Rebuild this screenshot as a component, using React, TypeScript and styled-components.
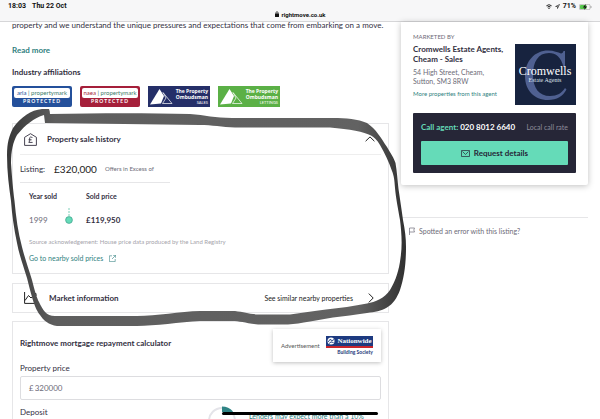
import React from "react";
import styled, { createGlobalStyle } from "styled-components";

const GlobalStyle = createGlobalStyle`
  * { box-sizing: border-box; }
  body {
    margin: 0;
    background: #fff;
    color: #33303f;
    font-family: Lato, "Liberation Sans", sans-serif;
    font-size: 8px;
    line-height: 12px;
  }
  h2, h3, p { margin: 0; font-size: 8px; }
  a { color: #2f7f80; text-decoration: none; }
  svg { display: block; flex: none; }
`

const Page = styled.div`
  position: relative;
  height: 100vh;
  overflow: hidden;
  display: flex;
  flex-direction: column;
`

const StatusBar = styled.header`
  display: grid;
  grid-template-columns: 1fr auto 1fr;
  flex: none;
  height: 22px;
  padding: 0 8px;
  background: #f7f7f8;
  border-bottom: 1px solid #d6d6d8;
  color: #111;
  font: 700 7px/13px Roboto, "Liberation Sans", sans-serif;
`

const Clock = styled.div`
  display: flex;
  gap: 6px;
`

const Address = styled.div`
  display: flex;
  align-items: center;
  align-self: end;
  gap: 3px;
  height: 14px;
  font-size: 6px;
`

const Indicators = styled.div`
  display: flex;
  justify-content: flex-end;
  align-items: center;
  gap: 3px;
  height: 13px;
`

const Columns = styled.main`
  display: grid;
  grid-template-columns: minmax(0, 1fr) 187px;
  column-gap: 12px;
  padding: 0 12px;
`

const Details = styled.div`
  display: flex;
  flex-direction: column;
`

const Description = styled.p`
  height: 12px;
  margin-top: -3px;
  white-space: nowrap;
`

const ReadMore = styled.a`
  align-self: flex-start;
  margin-top: 13px;
  font-weight: 700;
`

const SectionTitle = styled.h2`
  margin-top: 10px;
`

const Badges = styled.div`
  display: flex;
  gap: 8px;
  margin-top: 8px;
`

const MarkBadge = styled.div<{ $color: string }>`
  display: flex;
  flex-direction: column;
  align-items: center;
  width: 60px;
  height: 21px;
  padding: 2px;
  border-radius: 2px;
  background: ${p => p.$color};
  color: #fff;
  font: 700 5px/7px Lato, sans-serif;
  letter-spacing: 1px;
`

const MarkName = styled.div`
  width: 100%;
  height: 11px;
  border-radius: 2px;
  background: #fff;
  color: #3d7b6b;
  font: 400 6px/10px Lato, sans-serif;
  letter-spacing: 0;
  text-align: center;
  white-space: nowrap;
`

const MarkPrefix = styled.span<{ $color: string }>`
  color: ${p => p.$color};
`

const OmbudsmanBadge = styled.div<{ $color: string }>`
  display: flex;
  align-items: center;
  justify-content: space-between;
  width: 62px;
  height: 21px;
  padding: 0 2px;
  background: ${p => p.$color};
  color: #fff;
`

const OmbudsmanText = styled.div`
  text-align: right;
  white-space: nowrap;
  font: 700 5px/6px "Open Sans", sans-serif;
`

const OmbudsmanKind = styled.div`
  font: 400 4px/5px Lato, sans-serif;
`

const Card = styled.section`
  border: 1px solid #e6e6e8;
  padding: 0 7px;
`

const HistoryCard = styled(Card)`
  margin-top: 16px;
  padding-bottom: 9px;
`

const HistoryToggle = styled.button`
  display: flex;
  align-items: center;
  width: 100%;
  height: 31px;
  padding: 0 6px 0 4px;
  border: 0;
  border-bottom: 1px solid #eee;
  background: none;
  color: inherit;
  font: inherit;
  font-weight: 700;
  text-align: left;
`

const ToggleLabel = styled.span`
  flex: 1;
  margin-left: 10px;
`

const ListingRow = styled.div`
  display: flex;
  align-items: center;
  width: 150px;
  height: 28px;
  border-bottom: 1px solid #e6e6e8;
`

const ListingPrice = styled.span`
  margin: 0 8px 0 9px;
  font-size: 10px;
  color: #222;
`

const Small = styled.span`
  font-size: 6px;
  color: #6d6b78;
`

const SoldTable = styled.table`
  margin: 5px 0 0 9px;
  border-collapse: collapse;
  font-size: 7px;
  text-align: left;
  th, td { padding: 0; }
  th { height: 16px; }
  td { height: 32px; }
`

const YearCell = styled.td`
  width: 36px;
  color: #6d6b78;
  font-size: 8px;
`

const MarkerCell = styled.td`
  width: 21px;
`

const PriceCell = styled.td`
  font-weight: 700;
  font-size: 8px;
`

const Source = styled.p`
  margin: 0 0 4px 9px;
  color: #a5a4ab;
  font-size: 6px;
`

const NearbyLink = styled.a`
  display: inline-flex;
  align-items: center;
  gap: 6px;
  margin-left: 9px;
  font-size: 7px;
`

const MarketCard = styled(Card)`
  display: flex;
  align-items: center;
  height: 30px;
  margin-top: 9px;
  padding: 0 14px 0 11px;
`

const MarketTitle = styled.h3`
  flex: 1;
  margin-left: 12px;
`

const SimilarButton = styled.button`
  display: flex;
  align-items: center;
  gap: 15px;
  padding: 0;
  border: 0;
  background: none;
  color: #222;
  font: inherit;
  font-size: 7px;
`

const Calculator = styled(Card)`
  margin-top: 8px;
`

const CalculatorHead = styled.div`
  display: flex;
  justify-content: space-between;
  padding-top: 7px;
`

const CalculatorTitle = styled.h3`
  margin-top: 8px;
`

const Advert = styled.div`
  display: flex;
  align-items: center;
  justify-content: space-between;
  width: 108px;
  height: 33px;
  padding: 0 8px;
  box-shadow: 0 1px 4px rgba(0, 0, 0, 0.25);
  color: #555;
  font-size: 6px;
`

const Nationwide = styled.div`
  display: flex;
  flex-direction: column;
  align-items: flex-end;
  width: 47px;
  color: #26397a;
  font: 700 5px/8px Lato, sans-serif;
`

const NationwideName = styled.div`
  display: flex;
  align-items: center;
  justify-content: center;
  gap: 2px;
  width: 100%;
  height: 12px;
  border-bottom: 2px solid #c9252c;
  background: #1d3a80;
  color: #fff;
  font: 700 7px/10px "Liberation Serif", serif;
`

const FieldLabel = styled.label`
  display: block;
`

const PriceField = styled.div`
  display: flex;
  align-items: center;
  gap: 1px;
  height: 24px;
  margin: 2px 0 6px;
  padding: 0 8px;
  border: 1px solid #dddde0;
  border-radius: 2px;
  color: #6d6b78;
`

const PriceInput = styled.input`
  flex: 1;
  min-width: 0;
  padding: 0;
  border: 0;
  outline: 0;
  background: none;
  color: inherit;
  font: inherit;
`

const DepositRow = styled.div`
  display: flex;
  align-items: flex-start;
  height: 40px;
`

const DepositLabel = styled(FieldLabel)`
  width: 187px;
`

const LenderNote = styled.p`
  margin: 4px 0 0 12px;
  color: #2f7f80;
  font-size: 7px;
`

const Sidebar = styled.aside`
  display: flex;
  flex-direction: column;
`

const AgentCard = styled.section`
  padding: 9px 12px 12px;
  border-radius: 0 0 2px 2px;
  box-shadow: 0 1px 6px rgba(0, 0, 0, 0.25);
`

const AgentInfo = styled.div`
  display: flex;
  justify-content: space-between;
  white-space: nowrap;
`

const MarketedBy = styled.p`
  color: #6d6b78;
  font-size: 6px;
`

const AgentName = styled.h2`
  margin-top: 1px;
  line-height: 10px;
`

const AgentAddress = styled.p`
  margin: 4px 0 2px;
  color: #6d6b78;
  font-size: 7px;
  line-height: 9px;
`

const AgentLink = styled.a`
  display: block;
  font-size: 6px;
`

const AgentLogo = styled.svg`
  width: 61px;
  height: 61px;
  margin-top: 13px;
`

const ContactBox = styled.div`
  margin-top: 8px;
  padding: 8px;
  border-radius: 1px;
  background: #262637;
`

const ContactRow = styled.div`
  display: flex;
  justify-content: space-between;
  color: #8d8c99;
  font-size: 7px;
`

const Phone = styled.strong`
  color: #fff;
  font-size: 8px;
`

const PhoneLabel = styled.span`
  color: #65dbb8;
`

const RequestButton = styled.button`
  display: flex;
  align-items: center;
  justify-content: center;
  gap: 4px;
  width: 100%;
  height: 24px;
  margin-top: 8px;
  border: 0;
  border-radius: 1px;
  background: #65dbb8;
  color: #262637;
  font: inherit;
  font-weight: 700;
`

const ReportLink = styled.a`
  display: flex;
  align-items: center;
  gap: 4px;
  margin-top: 32px;
  padding: 7px 0 0 8px;
  border-top: 1px solid #e6e6e8;
  color: #6d6b78;
  font-size: 7px;
`

const HomeIndicator = styled.div`
  position: absolute;
  bottom: 4px;
  left: 37%;
  right: 37%;
  height: 3px;
  border-radius: 2px;
  background: #000;
`

const Scribble = styled.svg`
  position: absolute;
  top: 0;
  left: 0;
  pointer-events: none;
`

function Triangles() {
  return (
    <svg width="23" height="17" viewBox="0 0 23 17">
      <path d="M9.500 1 L14 8 L11 15.500 L0 16.500 Z" fill="#fff" />
      <path d="M13 4.500 L22 15.500 L12.500 15.500 L16 10 Z" fill="none" stroke="#fff" strokeWidth=".7" />
    </svg>
  )
}

function Ombudsman({ color, kind }: { color: string; kind: string }) {
  return (
    <OmbudsmanBadge $color={color}>
      <Triangles />
      <OmbudsmanText>
        The Property<br />Ombudsman
        <OmbudsmanKind>{kind}</OmbudsmanKind>
      </OmbudsmanText>
    </OmbudsmanBadge>
  )
}

function Propertymark({ color, prefix }: { color: string; prefix: string }) {
  return (
    <MarkBadge $color={color}>
      <MarkName><MarkPrefix $color={color}>{prefix}</MarkPrefix> | propertymark</MarkName>
      PROTECTED
    </MarkBadge>
  )
}

export default function App() {
  return (
    <Page>
      <GlobalStyle />
      <StatusBar>
        <Clock><span>18:03</span><span>Thu 22 Oct</span></Clock>
        <Address>
          <svg width="4" height="6" viewBox="0 0 4 6">
            <rect y="2.500" width="4" height="3.500" rx=".5" fill="#111" />
            <path d="M1 3V1.700a1 1 0 0 1 2 0V3" fill="none" stroke="#111" strokeWidth=".7" />
          </svg>
          rightmove.co.uk
        </Address>
        <Indicators>
          <svg width="6" height="5" viewBox="0 0 6 5">
            <path d="M.4 1.800Q3 -.4 5.600 1.800M1.500 3Q3 1.800 4.500 3" fill="none" stroke="#111" strokeWidth=".9" />
            <circle cx="3" cy="4.200" r=".7" fill="#111" />
          </svg>
          <svg width="5" height="5" viewBox="0 0 5 5">
            <path d="M4.500 .5L.6 2.500H2.500V4.500Z" fill="none" stroke="#111" strokeWidth=".6" />
          </svg>
          <span>71%</span>
          <svg width="13" height="6" viewBox="0 0 13 6">
            <rect x=".3" y=".3" width="10.800" height="5.400" rx="1.500" fill="none" stroke="#999" strokeWidth=".6" />
            <rect x="1" y="1" width="6.500" height="4" rx=".8" fill="#57c84d" />
            <path d="M6.800 0L3.800 3.400H5.800L5 6L8.200 2.600H6.200Z" fill="#111" />
            <path d="M12 2v2" stroke="#999" strokeWidth=".8" />
          </svg>
        </Indicators>
      </StatusBar>

      <Columns>
        <Details>
          <Description>
            property and we understand the unique pressures and expectations that come from embarking on a move.
          </Description>
          <ReadMore href="#more">Read more</ReadMore>
          <SectionTitle>Industry affiliations</SectionTitle>
          <Badges>
            <Propertymark color="#24509b" prefix="arla" />
            <Propertymark color="#a51f3a" prefix="naea" />
            <Ombudsman color="#252f68" kind="SALES" />
            <Ombudsman color="#5bb046" kind="LETTINGS" />
          </Badges>

          <HistoryCard>
            <HistoryToggle aria-expanded="true">
              <svg width="13" height="13" viewBox="0 0 13 13" fill="none" stroke="#33303f" strokeWidth=".9">
                <path d="M.6 12.400V4.300L6.500 .7L12.400 4.300V12.400Z" />
                <path d="M8.400 5Q7.800 3.700 6.500 4Q5.300 4.400 5.700 6Q6.100 8 4.800 9.400H8.600M4.500 6.800H7.600" />
              </svg>
              <ToggleLabel>Property sale history</ToggleLabel>
              <svg width="10" height="6" viewBox="0 0 10 6">
                <path d="M.6 5.200L5 .9L9.400 5.200" fill="none" stroke="#222" strokeWidth="1" />
              </svg>
            </HistoryToggle>
            <ListingRow>
              Listing:
              <ListingPrice>£320,000</ListingPrice>
              <Small>Offers in Excess of</Small>
            </ListingRow>
            <SoldTable>
              <thead>
                <tr><th colSpan={2}>Year sold</th><th>Sold price</th></tr>
              </thead>
              <tbody>
                <tr>
                  <YearCell>1999</YearCell>
                  <MarkerCell>
                    <svg width="8" height="30" viewBox="0 0 8 30">
                      <path d="M4 3V11" stroke="#7ccfb8" strokeDasharray="2 1" />
                      <circle cx="4" cy="15" r="3.400" fill="#65dbb8" stroke="#3f9f8b" strokeWidth=".7" />
                    </svg>
                  </MarkerCell>
                  <PriceCell>£119,950</PriceCell>
                </tr>
              </tbody>
            </SoldTable>
            <Source>Source acknowledgement: House price data produced by the Land Registry</Source>
            <NearbyLink href="#sold">
              Go to nearby sold prices
              <svg width="7" height="7" viewBox="0 0 7 7" fill="none" stroke="#2f7f80" strokeWidth=".6">
                <path d="M3 .8H.4V6.600H6.200V4M4.200 .4H6.600V2.800M6.600 .4L3 4" />
              </svg>
            </NearbyLink>
          </HistoryCard>

          <MarketCard>
            <svg width="13" height="12" viewBox="0 0 13 12" fill="none" stroke="#222" strokeWidth="1">
              <path d="M.6 0V11.400H12.500M1 8.500L4.500 3.500L7 6L12 1.500M9.500 1.500H12V4" />
            </svg>
            <MarketTitle>Market information</MarketTitle>
            <SimilarButton>
              See similar nearby properties
              <svg width="6" height="10" viewBox="0 0 6 10">
                <path d="M.8 .6L5.200 5L.8 9.400" fill="none" stroke="#222" strokeWidth="1" />
              </svg>
            </SimilarButton>
          </MarketCard>

          <Calculator>
            <CalculatorHead>
              <CalculatorTitle>Rightmove mortgage repayment calculator</CalculatorTitle>
              <Advert>
                Advertisement
                <Nationwide>
                  <NationwideName>
                    <svg width="8" height="8" viewBox="0 0 8 8">
                      <circle cx="4" cy="4" r="3.500" fill="#fff" />
                      <path d="M1 5L3.500 2L4.500 4L7 2.500M2 6.500L4 5L6.500 5.500" fill="none" stroke="#1d3a80" strokeWidth=".9" />
                    </svg>
                    Nationwide
                  </NationwideName>
                  Building Society
                </Nationwide>
              </Advert>
            </CalculatorHead>
            <FieldLabel htmlFor="price">Property price</FieldLabel>
            <PriceField>
              £
              <PriceInput id="price" defaultValue="320000" />
            </PriceField>
            <DepositRow>
              <DepositLabel as="span">Deposit</DepositLabel>
              <svg width="30" height="32" viewBox="0 0 30 32" fill="none">
                <circle cx="15" cy="15" r="13" stroke="#e4e4e9" strokeWidth="2" />
                <path d="M15 .5A14.500 14.500 0 0 1 26 5.500L22 9A9 9 0 0 0 15 6Z" fill="#2f8485" />
              </svg>
              <LenderNote>Lenders may expect more than a 10%</LenderNote>
            </DepositRow>
          </Calculator>
        </Details>

        <Sidebar>
          <AgentCard>
            <AgentInfo>
              <div>
                <MarketedBy>MARKETED BY</MarketedBy>
                <AgentName>Cromwells Estate Agents,<br />Cheam - Sales</AgentName>
                <AgentAddress>54 High Street, Cheam,<br />Sutton, SM3 8RW</AgentAddress>
                <AgentLink href="#agent">More properties from this agent</AgentLink>
              </div>
              <AgentLogo viewBox="0 0 61 61" role="img" aria-label="Cromwells Estate Agents">
                <rect width="61" height="61" fill="#17233f" />
                <path
                  d="M50 7V23H48.500C46 13 41 9 34 9C23 9 18 18 18 31C18 44 24 52 35 52C42 52 47 49 50 44L51.500 45.500C48 52 42 56 33 56C19 56 10 46 10 32C10 17 20 6.500 33 6.500C39 6.500 43 8.500 46 9.500C47.500 9.500 48 8.500 48.500 7Z"
                  fill="#4f6091"
                />
                <text x="30" y="31" textAnchor="middle" fill="#fff" fontFamily="Liberation Serif" fontSize="12">Cromwells</text>
                <text x="30" y="38" textAnchor="middle" fill="#dfe3ee" fontFamily="Liberation Serif" fontSize="6">Estate Agents</text>
              </AgentLogo>
            </AgentInfo>
            <ContactBox>
              <ContactRow>
                <Phone><PhoneLabel>Call agent:</PhoneLabel> 020 8012 6640</Phone>
                <span>Local call rate</span>
              </ContactRow>
              <RequestButton>
                <svg width="9" height="7" viewBox="0 0 9 7" fill="none" stroke="#262637" strokeWidth=".7">
                  <path d="M.5 .5H8.500V6.500H.5ZM1.500 1.500L4.500 4.500L7.500 1.500" />
                </svg>
                Request details
              </RequestButton>
            </ContactBox>
          </AgentCard>
          <ReportLink href="#report">
            <svg width="6" height="8" viewBox="0 0 6 8">
              <path d="M.5 8V1H5.500L4.800 3L5.500 5H.5" fill="none" stroke="#6d6b78" strokeWidth=".7" />
            </svg>
            Spotted an error with this listing?
          </ReportLink>
        </Sidebar>
      </Columns>

      <HomeIndicator />
      <Scribble width="600" height="419" viewBox="0 0 600 419" aria-hidden="true">
        <defs>
          <linearGradient id="ink" x1="0" x2="1" y1="0" y2="0">
            <stop offset="0" stopColor="#383838" />
            <stop offset=".12" stopColor="#5e5e5e" />
            <stop offset=".88" stopColor="#626262" />
            <stop offset="1" stopColor="#303030" />
          </linearGradient>
        </defs>
        <path
          fill="url(#ink)"
          fillRule="evenodd"
          d="M49 109Q50 111 50 114C100 113 150 113 190 114C205 115 215 118 232 118H333C346 118 358 119 367 123C376 129 381 138 387 147C391 154 394 158 395.500 163C397 172 397.500 180 398.500 189C400 199 401.500 209 403 220C405 230 406 238 406 247C406 265 404 278 400 290C397 298 393 304 387 307.500C381 311 375 312 367 313C355 315 344 316 333 317.500C325 319 318 320 310 321.500C301 323 295 324 288 324.500H258C245 323 240 321 232 321H200C180 322 155 326 137 326H57C49 325 43 320 40 315C35 308 33 302 27 278C23 265 19 254 17 243C14 229 12 215 11 201C9 187 7 172 7 155C7 143 9 136 13 128C21 117 31 110 42 109ZM44 115C34 118 25 125 17 135C13 142 11 151 11 163C12 178 13 189 14.500 201C16 217 18 232 22 247C25 259 29 270 32 280C35 292 37 298 39 302C43 310 46 316 55 316H137C157 316 180 311.500 200 311H235C244 312 249 314 258 314.500H290C302 313 313 311 326 309.500C340 308 354 306 367 303.500C375 302 385 298 390 290C396 280 399 270 400.500 258C402.500 245 401.500 232 400 220C398 208 396 199 395 188C394.500 180 394 176 392 171C389 162 385 154 380 145C377 140 374 137 371 135.500C364 132 350 129 330 127.500H235C222 127 212 125 200 125C150 124 100 124 45 123Z"
        />
      </Scribble>
    </Page>
  )
}
